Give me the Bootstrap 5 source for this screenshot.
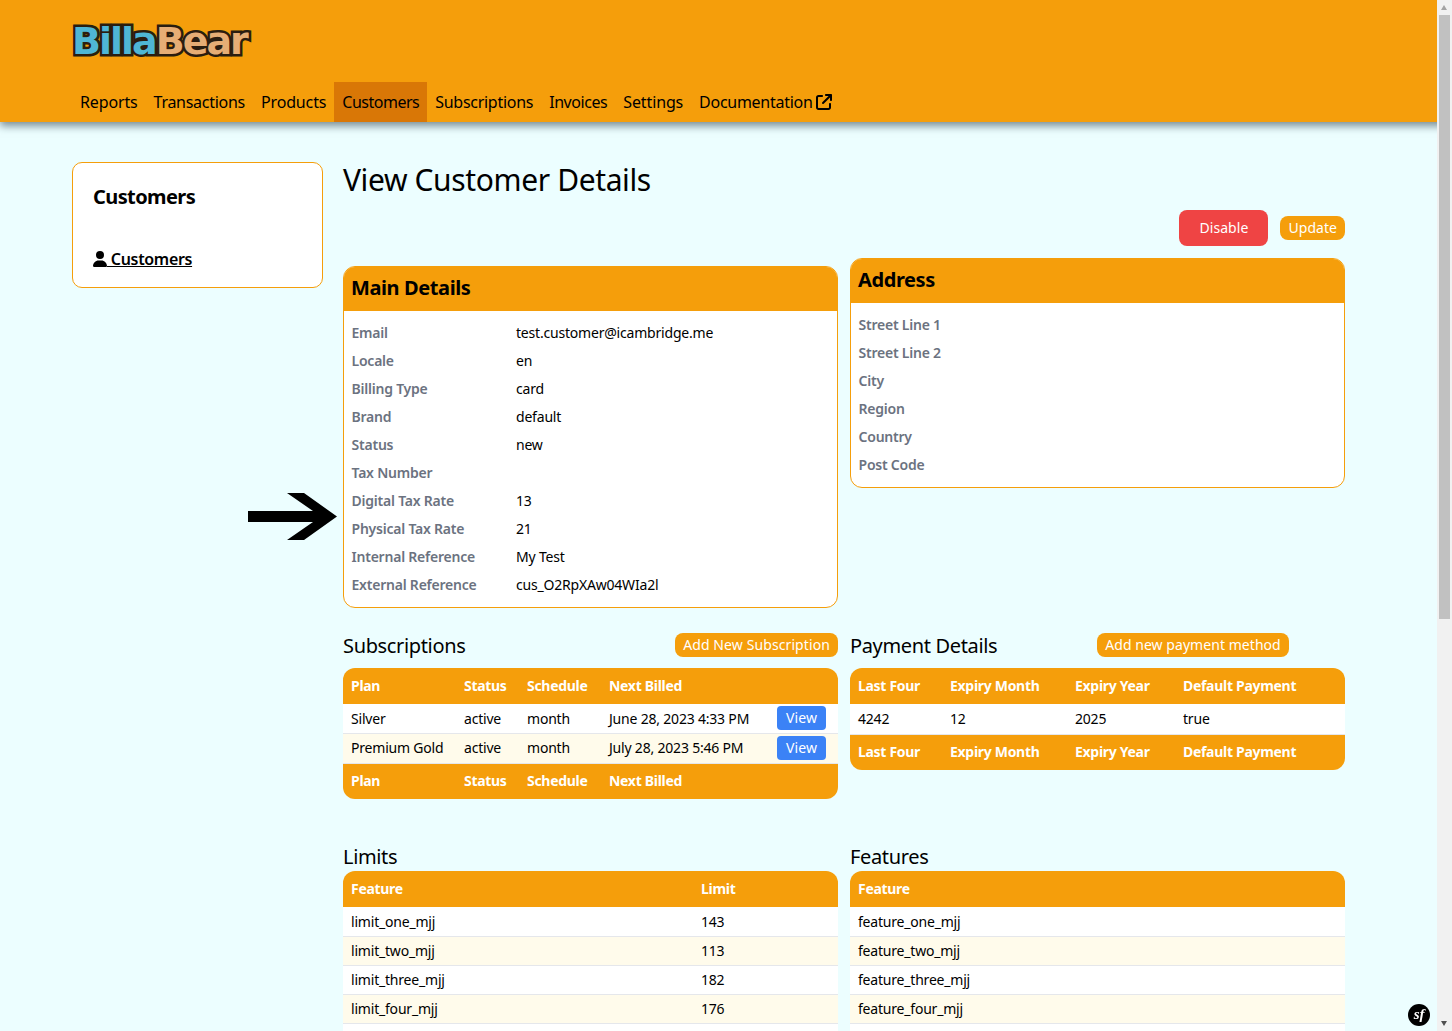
<!DOCTYPE html>
<html lang="en"><head><meta charset="utf-8"><title>BillaBear</title>
<link rel="stylesheet" href="https://cdn.jsdelivr.net/npm/bootstrap@5.3.0/dist/css/bootstrap.min.css">
<style>
body{background:#ecfeff;font-family:"Noto Sans","Liberation Sans",sans-serif;font-size:14px;letter-spacing:-.2px;color:#000;min-height:1700px}
.bb-top{background:#f59e0b;height:122px;box-shadow:0 4px 8px rgba(30,50,60,.55);padding:0 0 0 72px;display:block}
.bb-logo{display:block;height:82px;padding-top:21px;font:700 38px/40px "DejaVu Sans",sans-serif;letter-spacing:-2px;-webkit-text-stroke:5px #2a1d10;paint-order:stroke fill}
.bb-logo b{font-weight:700;color:#4fb6d4}.bb-logo i{font-style:normal;color:#e6ad75}
.bb-menu{display:flex;height:40px}
.bb-menu a{color:#000;text-decoration:none;font-size:16px;letter-spacing:-.28px;line-height:40px;padding:0 8px}
.bb-menu a:nth-child(1),.bb-menu a:nth-child(3),.bb-menu a:nth-child(7){letter-spacing:-.14px}
.bb-menu a:nth-child(4){letter-spacing:-.5px}
.bb-menu a:nth-child(6){letter-spacing:-.43px}
.bb-menu a.on{background:#d97706}
.bb-menu svg{width:16px;height:16px;vertical-align:-2px}
.bb-page{display:flex;gap:20px;padding:40px 0 0 72px;width:1345px}
.bb-side{width:251px;height:126px;flex:none;border:1px solid #f59e0b;border-radius:10px;background:#fff;padding:21px 20px}
.bb-side h2{font-size:20px;font-weight:700;letter-spacing:-.6px;margin:0 0 37px;line-height:26px}
.bb-side a{color:#000;font-size:16px;font-weight:600;letter-spacing:-.33px;line-height:24px}
.bb-side svg{width:14px;height:16px;vertical-align:-2px}
.bb-main{width:1002px;flex:none}
.bb-main h1{font-size:30px;font-weight:400;letter-spacing:-.38px;line-height:36px;margin:0 0 12px}
.bb-act{display:flex;justify-content:flex-end;align-items:center;gap:12px;height:36px;margin-bottom:12px}
.bb-btn{background:#f59e0b;color:#fff;border:0;border-radius:8px;font-size:14px;letter-spacing:.05px;line-height:24px;height:24px;padding:0 8px}
.bb-btn:hover{background:#f59e0b;color:#fff}
.bb-wide{letter-spacing:.1px}
.bb-red{background:#ef4444;height:36px;line-height:36px;width:89px;padding:0;border-radius:8px}
.bb-red:hover{background:#ef4444}
.bb-grid{display:grid;grid-template-columns:495px 495px;column-gap:12px}
.bb-panel{border:1px solid #f59e0b;border-radius:12px;background:#fff;overflow:hidden;align-self:start}
.bb-panel h3{background:#f59e0b;height:44px;margin:0;font-size:20px;font-weight:700;letter-spacing:-.4px;line-height:42px;padding:0 7px}
.bb-panel dl{margin:0;padding:8px 7px 8px 7.5px}
.bb-panel dl>div{display:flex;height:28px;line-height:28px}
.bb-panel dt{width:164.5px;font-weight:600;color:#6b7280;flex:none;letter-spacing:-.22px}
.bb-panel dd{margin:0}
.bb-head{display:flex;align-items:center;height:24px;margin-bottom:11px}
.bb-head h4{font-size:20px;font-weight:400;letter-spacing:-.35px;margin:0;line-height:24px;padding-top:2px}
.bb-tw{border-radius:12px;overflow:hidden}
.bb-tab{width:100%;margin:0;table-layout:fixed;--bs-table-bg:transparent}
.bb-tab th{background:#f59e0b;color:#fff;font-weight:700;letter-spacing:-.3px;height:36px;padding:0 8px 2px;border:0;vertical-align:middle}
.bb-tab td{background:#fff;height:29px;padding:0 8px;vertical-align:middle;border-bottom:1px solid #e5e7eb;color:#000}
.bb-tab tr:nth-child(even) td{background:#fffbeb}
.bb-view{background:#3b82f6;color:#fff;border:0;border-radius:4px;line-height:24px;height:24px;width:49px;padding:0;font-size:14px;letter-spacing:.1px;display:block}
.bb-view:hover{background:#3b82f6;color:#fff}
.bb-arrow{position:absolute;left:247px;top:492px;width:91px;height:49px}
.bb-sf{position:fixed;right:22px;bottom:5px;width:22px;height:22px;border-radius:50%;background:#000;color:#fff;font:italic 700 15px/21px "Liberation Serif",serif;text-align:center}
.bb-sb{position:fixed;top:0;right:0;bottom:0;width:15px;background:#f1f1f1}
.bb-thumb{position:absolute;left:2px;top:15px;width:11px;height:604px;background:#c1c1c1}
.bb-up,.bb-dn{position:absolute;left:4px;width:0;height:0;border-left:3.5px solid transparent;border-right:3.5px solid transparent}
.bb-up{top:5px;border-bottom:5px solid #a3a3a3}
.bb-dn{bottom:5px;border-top:5px solid #505050}
.bb-gap1{margin-top:25px}.bb-gap2{margin-top:46px}
.bb-head.bb-h26{height:26px;margin-bottom:0;align-items:flex-start}
.bb-head.bb-h26 h4{padding-top:0}
.bb-addpay{margin-left:100px}
.bb-last td{height:30px}
.bb-tab .bb-pad td{padding-bottom:2px}
.bb-pad .bb-view{margin:1px 0 -1px}
.bb-c113{width:113px}.bb-c63{width:63px}.bb-c82{width:82px}.bb-c168{width:168px}.bb-c92{width:92px}.bb-c125{width:125px}.bb-c108{width:108px}.bb-c350{width:350px}
</style></head><body>
<header class="bb-top">
<a class="bb-logo text-decoration-none" href="#"><b>Billa</b><i>Bear</i></a>
<nav class="bb-menu">
<a href="#">Reports</a><a href="#">Transactions</a><a href="#">Products</a><a href="#" class="on">Customers</a><a href="#">Subscriptions</a><a href="#">Invoices</a><a href="#">Settings</a>
<a href="#">Documentation <svg viewBox="0 0 512 512"><path d="M320 0c-17.7 0-32 14.3-32 32s14.3 32 32 32h82.7L201.4 265.4c-12.5 12.5-12.5 32.8 0 45.3s32.8 12.5 45.3 0L448 109.3V192c0 17.7 14.3 32 32 32s32-14.3 32-32V32c0-17.7-14.3-32-32-32H320zM80 32C35.8 32 0 67.8 0 112V432c0 44.2 35.8 80 80 80H400c44.2 0 80-35.8 80-80V320c0-17.7-14.3-32-32-32s-32 14.3-32 32V432c0 8.8-7.2 16-16 16H80c-8.8 0-16-7.2-16-16V112c0-8.8 7.2-16 16-16H192c17.7 0 32-14.3 32-32s-14.3-32-32-32H80z"/></svg></a>
</nav></header>
<svg class="bb-arrow" viewBox="0 0 91 49"><polygon points="1,19 66,19 40,1 57,1 90,24.5 57,48 40,48 66,30 1,30"/></svg>
<div class="bb-page">
<aside class="bb-side"><h2>Customers</h2><a href="#"><svg viewBox="0 0 448 512"><path d="M224 256A128 128 0 1 0 224 0a128 128 0 1 0 0 256zm-45.7 48C79.8 304 0 383.8 0 482.3C0 498.7 13.3 512 29.7 512H418.3c16.4 0 29.7-13.3 29.7-29.7C448 383.8 368.2 304 269.7 304H178.3z"/></svg> Customers</a></aside>
<main class="bb-main">
<h1>View Customer Details</h1>
<div class="bb-act"><button class="btn bb-btn bb-red">Disable</button><button class="btn bb-btn">Update</button></div>
<div class="bb-grid">
<section class="bb-panel mt-2"><h3>Main Details</h3><dl>
<div><dt>Email</dt><dd>test.customer@icambridge.me</dd></div>
<div><dt>Locale</dt><dd>en</dd></div>
<div><dt>Billing Type</dt><dd>card</dd></div>
<div><dt>Brand</dt><dd>default</dd></div>
<div><dt>Status</dt><dd>new</dd></div>
<div><dt>Tax Number</dt><dd></dd></div>
<div><dt>Digital Tax Rate</dt><dd>13</dd></div>
<div><dt>Physical Tax Rate</dt><dd>21</dd></div>
<div><dt>Internal Reference</dt><dd>My Test</dd></div>
<div><dt>External Reference</dt><dd>cus_O2RpXAw04WIa2l</dd></div>
</dl></section>
<section class="bb-panel"><h3>Address</h3><dl>
<div><dt>Street Line 1</dt><dd></dd></div>
<div><dt>Street Line 2</dt><dd></dd></div>
<div><dt>City</dt><dd></dd></div>
<div><dt>Region</dt><dd></dd></div>
<div><dt>Country</dt><dd></dd></div>
<div><dt>Post Code</dt><dd></dd></div>
</dl></section>
</div>
<div class="bb-grid bb-gap1">
<section>
<div class="bb-head justify-content-between"><h4>Subscriptions</h4><button class="btn bb-btn bb-wide">Add New Subscription</button></div>
<div class="bb-tw"><table class="table bb-tab"><colgroup><col class="bb-c113"><col class="bb-c63"><col class="bb-c82"><col class="bb-c168"><col></colgroup>
<thead><tr><th>Plan</th><th>Status</th><th>Schedule</th><th>Next Billed</th><th></th></tr></thead>
<tbody><tr><td>Silver</td><td>active</td><td>month</td><td>June 28, 2023 4:33 PM</td><td><button class="btn bb-view">View</button></td></tr>
<tr class="bb-last bb-pad"><td>Premium Gold</td><td>active</td><td>month</td><td>July 28, 2023 5:46 PM</td><td><button class="btn bb-view">View</button></td></tr></tbody>
<tfoot><tr><th>Plan</th><th>Status</th><th>Schedule</th><th>Next Billed</th><th></th></tr></tfoot></table></div>
</section>
<section>
<div class="bb-head"><h4>Payment Details</h4><button class="btn bb-btn bb-addpay">Add new payment method</button></div>
<div class="bb-tw"><table class="table bb-tab"><colgroup><col class="bb-c92"><col class="bb-c125"><col class="bb-c108"><col></colgroup>
<thead><tr><th>Last Four</th><th>Expiry Month</th><th>Expiry Year</th><th>Default Payment</th></tr></thead>
<tbody><tr class="bb-last"><td>4242</td><td>12</td><td>2025</td><td>true</td></tr></tbody>
<tfoot><tr><th>Last Four</th><th>Expiry Month</th><th>Expiry Year</th><th>Default Payment</th></tr></tfoot></table></div>
</section>
</div>
<div class="bb-grid bb-gap2">
<section>
<div class="bb-head bb-h26"><h4>Limits</h4></div>
<div class="bb-tw"><table class="table bb-tab"><colgroup><col class="bb-c350"><col></colgroup>
<thead><tr><th>Feature</th><th>Limit</th></tr></thead>
<tbody><tr><td>limit_one_mjj</td><td>143</td></tr><tr><td>limit_two_mjj</td><td>113</td></tr><tr><td>limit_three_mjj</td><td>182</td></tr><tr><td>limit_four_mjj</td><td>176</td></tr><tr><td>limit_five_mjj</td><td>120</td></tr></tbody></table></div>
</section>
<section>
<div class="bb-head bb-h26"><h4>Features</h4></div>
<div class="bb-tw"><table class="table bb-tab">
<thead><tr><th>Feature</th></tr></thead>
<tbody><tr><td>feature_one_mjj</td></tr><tr><td>feature_two_mjj</td></tr><tr><td>feature_three_mjj</td></tr><tr><td>feature_four_mjj</td></tr><tr><td>feature_five_mjj</td></tr></tbody></table></div>
</section>
</div>
</main>
</div>
<div class="bb-sf">sf</div>
<div class="bb-sb"><div class="bb-up"></div><div class="bb-thumb"></div><div class="bb-dn"></div></div>
<script src="https://cdn.jsdelivr.net/npm/bootstrap@5.3.0/dist/js/bootstrap.bundle.min.js"></script>
</body></html>
